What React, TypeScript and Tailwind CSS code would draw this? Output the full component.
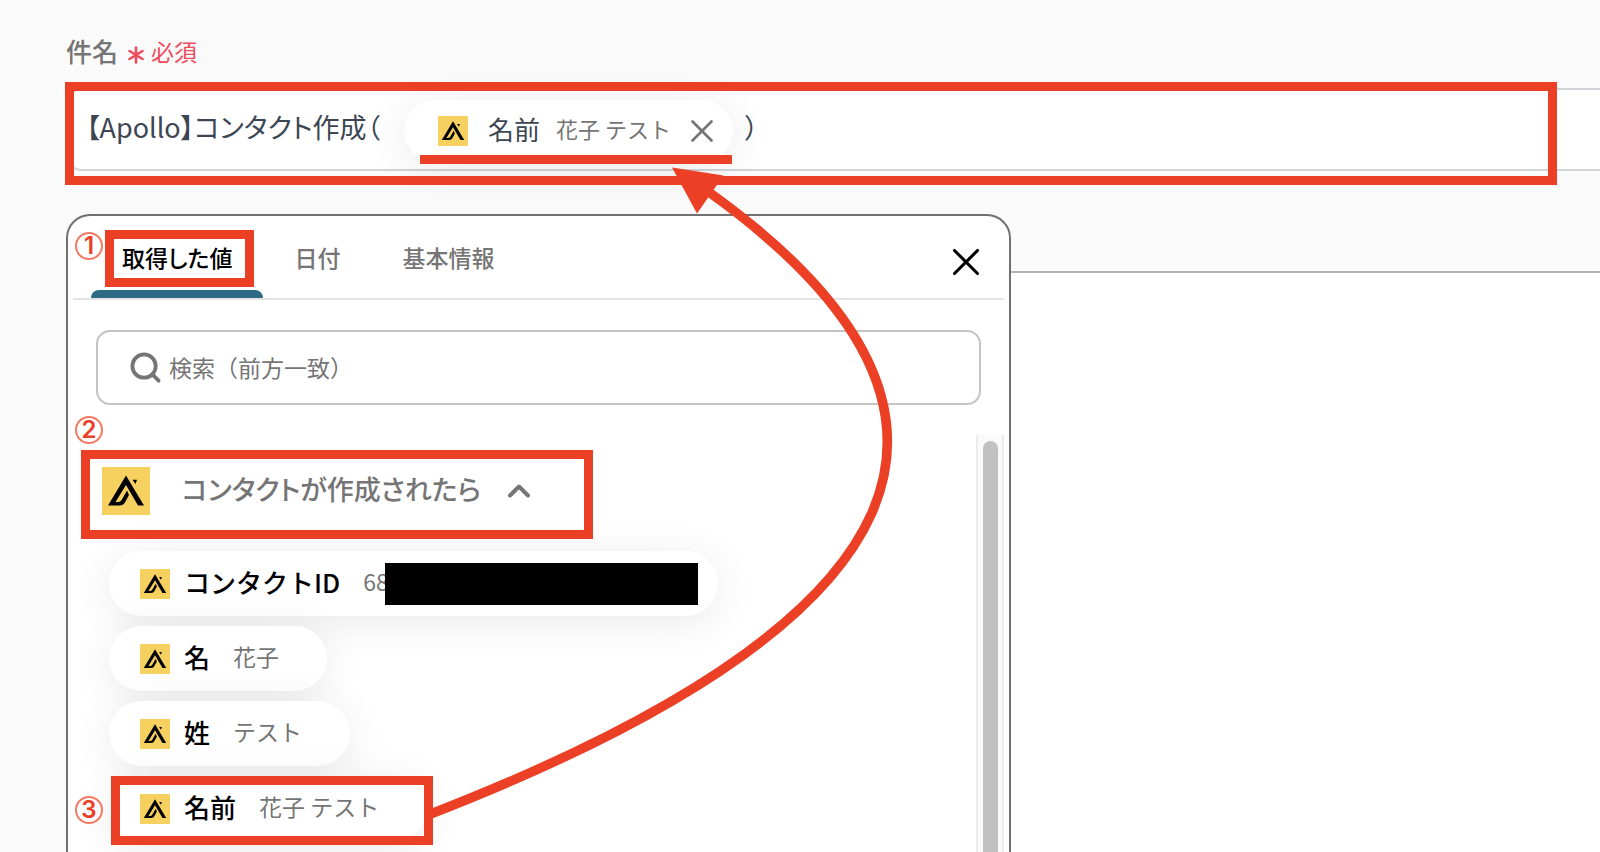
import React, { useState } from 'react';
import { ChevronUp, Search, X } from 'lucide-react';

interface OutputItem {
  id: string;
  label: string;
  value: string;
  masked?: boolean;
  highlighted?: boolean;
}

const tabs = [
  { id: 'values', label: '取得した値' },
  { id: 'date', label: '日付' },
  { id: 'basic', label: '基本情報' },
];

const outputs: OutputItem[] = [
  { id: 'contact-id', label: 'コンタクトID', value: '68', masked: true },
  { id: 'first-name', label: '名', value: '花子' },
  { id: 'last-name', label: '姓', value: 'テスト' },
  { id: 'name', label: '名前', value: '花子 テスト', highlighted: true },
];

function ApolloLogo({ className }: { className: string }) {
  return (
    <svg viewBox="0 0 48 48" className={className} aria-hidden="true">
      <rect width="48" height="48" fill="#f7d15f" />
      <path
        d="M24 8.5 L42 38.5 H36 L24 18 L13.5 35 H16 C18.5 35 19.3 33.6 20.3 31.8 L25 23.5 L27 28 L23.5 34.5 C22 37.3 20.5 38.5 17.5 38.5 H6 Z"
        fill="#000"
      />
      <path d="M30.500 12.800 H35 L33.500 17 Z" fill="#000" />
    </svg>
  );
}

function StepNumber({ children, className }: { children: React.ReactNode; className: string }) {
  return (
    <span
      className={`absolute flex size-7 items-center justify-center rounded-full border-2 border-[#f37a63] font-[Inter,sans-serif] text-[24px] leading-none font-semibold text-[#eb4025] ${className}`}
    >
      {children}
    </span>
  );
}

function Highlight({ className }: { className: string }) {
  return <span className={`pointer-events-none absolute border-[9px] border-[#eb4025] ${className}`} />;
}

function OutputChip({ item }: { item: OutputItem }) {
  return (
    <li className="relative flex">
      <button
        type="button"
        className="flex h-[65px] items-center rounded-full bg-white pr-12 pl-[31px] shadow-[0_6px_40px_rgba(0,0,0,0.09)]"
      >
        <ApolloLogo className="size-[30px]" />
        <span className="ml-3.5 pb-1 text-[26px] font-medium text-black">{item.label}</span>
        <span className="ml-[23px] pb-1 text-[23px] text-[#757575]">{item.value}</span>
        {item.masked && <span className="-mr-7 -ml-1 h-[42px] w-[313px] bg-black" />}
      </button>
      {item.highlighted && (
        <>
          <StepNumber className="top-5 -left-[34px]">3</StepNumber>
          <Highlight className="top-0 left-0.5 h-[69px] w-[322px]" />
        </>
      )}
    </li>
  );
}

export default function App() {
  const [activeTab, setActiveTab] = useState('values');
  const [query, setQuery] = useState('');

  return (
    <div className="relative flex h-screen flex-col overflow-hidden bg-[#fafafa] pl-[66px] font-['Noto_Sans_CJK_JP',sans-serif]">
      <div id="subject-label" className="flex h-[88px] items-center pt-8 pb-[18px]">
        <span className="text-[26px] leading-9 font-medium text-[#757575]">件名</span>
        <svg viewBox="0 0 16 18" className="mt-2 ml-2.5 h-[18px] w-4" aria-hidden="true">
          <path d="M8 1.500 V16.500 M1.500 5 L14.500 13 M14.500 5 L1.500 13" stroke="#ef4b5c" strokeWidth="2.6" strokeLinecap="round" />
        </svg>
        <span className="ml-[7px] text-[23px] leading-9 text-[#ef4b5c]">必須</span>
      </div>

      {/* Subject field with the inserted value */}
      <div className="relative">
        <div
          role="textbox"
          aria-labelledby="subject-label"
          className="-mr-4 flex h-[83px] items-center rounded-2xl border-2 border-[#ced4da] bg-white pl-[18px] text-[27px] text-[#3c4652]"
        >
          <span className="pb-1 [font-feature-settings:'palt']">【Apollo】コンタクト作成（</span>
          <span className="mt-0.5 mr-3 ml-6 flex h-[62px] items-center rounded-full bg-white pr-3 pl-[34px] shadow-[0_6px_40px_rgba(0,0,0,0.09)]">
            <ApolloLogo className="size-[30px]" />
            <span className="ml-5 pb-1 text-[26px]">名前</span>
            <span className="ml-4 pb-1 text-[22px] text-[#757575]">花子 テスト</span>
            <button type="button" aria-label="削除" className="ml-3 text-[#757575]">
              <X className="size-[38px]" strokeWidth={1.7} />
            </button>
          </span>
          <span className="pb-1 [font-feature-settings:'palt']">）</span>
        </div>
        <Highlight className="-top-1.5 -left-px right-[43px] h-[103px]" />
        <span className="pointer-events-none absolute top-[67px] left-[354px] h-[9px] w-[312px] bg-[#eb4025]" />
      </div>

      {/* Body field, with the value picker opened over it */}
      <div className="relative mt-[100px] flex grow">
        <textarea
          aria-label="本文"
          className="-mr-4 -mb-4 grow resize-none rounded-2xl border-2 border-[#b3b3b3] bg-white outline-none"
        />

        <section className="absolute -top-[57px] bottom-0 left-0 flex w-[945px] flex-col rounded-t-3xl border-2 border-b-0 border-[#707070] bg-white px-[5px]">
          <div className="relative flex h-[84px] items-stretch border-b-2 border-[#e4e4e4]">
            <div role="tablist" className="flex items-stretch pl-[18px]">
              {tabs.map((tab) => (
                <button
                  key={tab.id}
                  type="button"
                  role="tab"
                  aria-selected={activeTab === tab.id}
                  onClick={() => setActiveTab(tab.id)}
                  className={`flex flex-col items-center justify-between text-[23px] font-medium [font-feature-settings:'palt'] ${
                    activeTab === tab.id ? 'text-black' : 'text-[#757575]'
                  }`}
                >
                  <span className="px-[31px] pt-[23px] leading-9">{tab.label}</span>
                  {activeTab === tab.id && <span className="h-2 w-full rounded-t-lg bg-[#2d6a85]" />}
                </button>
              ))}
            </div>
            <button type="button" aria-label="閉じる" className="mr-[15px] ml-auto pt-2.5 text-black">
              <X className="size-[46px]" strokeWidth={1.6} />
            </button>
            <StepNumber className="top-4 left-0.5">1</StepNumber>
            <Highlight className="top-3.5 left-8 h-[57px] w-[149px]" />
          </div>

          <label className="mx-[23px] mt-[30px] flex h-[75px] items-center rounded-[14px] border-2 border-[#c4c4c4] px-[30px]">
            <Search className="size-[35px] text-[#757575]" strokeWidth={2.6} />
            <input
              type="text"
              aria-label="検索"
              placeholder="検索（前方一致）"
              value={query}
              onChange={(e) => setQuery(e.target.value)}
              className="ml-1.5 grow text-[23px] outline-none placeholder:text-[#757575]"
            />
          </label>

          <div className="relative mt-[30px] flex grow">
            <div className="grow">
              <div className="relative flex py-5">
                <StepNumber className="-top-[19px] left-0.5">2</StepNumber>
                <button type="button" className="flex h-[76px] items-center pb-[5px] pl-[29px] text-[#757575]">
                  <ApolloLogo className="size-12" />
                  <span className="ml-8 pb-0.5 text-[27px] font-medium [font-feature-settings:'palt']">
                    コンタクトが作成されたら
                  </span>
                  <ChevronUp className="ml-5 size-9" strokeWidth={2.6} />
                </button>
                <Highlight className="top-[15px] left-2 h-[89px] w-[512px]" />
              </div>
              <ul className="flex flex-col gap-2.5 pl-9">
                {outputs.map((item) => (
                  <OutputChip key={item.id} item={item} />
                ))}
              </ul>
            </div>
            <div className="flex w-7 justify-center border-x-2 border-[#ececec] bg-[#fafafa] pt-1.5">
              <div className="w-[15px] rounded-t-full bg-[#c1c1c1]" />
            </div>
          </div>
        </section>
      </div>

      {/* Arrow from the listed value to the inserted one */}
      <svg viewBox="0 0 1600 852" className="pointer-events-none absolute top-0 left-0 h-[852px] w-[1600px]" aria-hidden="true">
        <path d="M428 815 Q1176 525 706 190" fill="none" stroke="#eb4025" strokeWidth="9.5" />
        <path d="M672 167.500 L723.500 175.500 L697 213.500 Z" fill="#eb4025" />
      </svg>
    </div>
  );
}
